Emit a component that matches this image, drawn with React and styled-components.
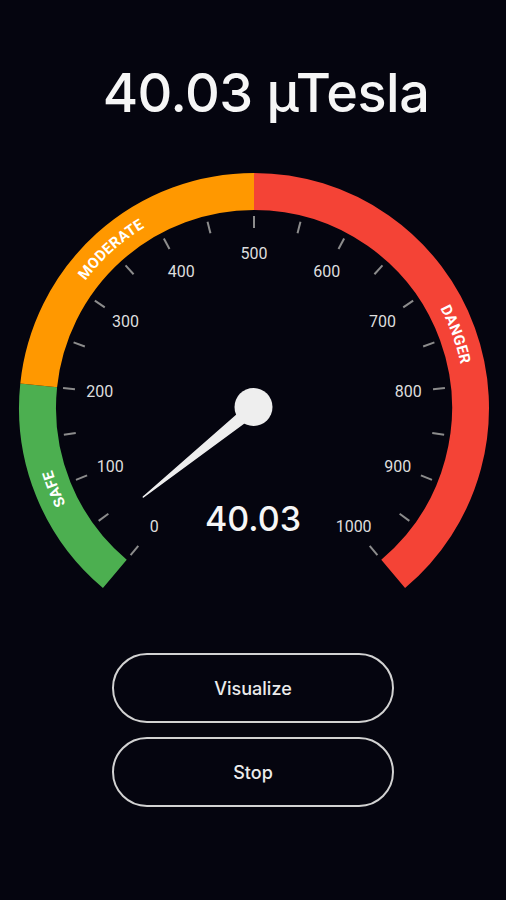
import styled, { createGlobalStyle } from "styled-components";

const GlobalStyle = createGlobalStyle`
  html, body {
    margin: 0;
    padding: 0;
    background: #05050f;
  }
`;

const CX = 254;
const CY = 248;
const R_BAND = 216.5;
const BAND_W = 37;

const angleOf = (v) => ((230 - v * 0.28) * Math.PI) / 180;

const pt = (v, r) => {
  const a = angleOf(v);
  return [CX + r * Math.cos(a), CY - r * Math.sin(a)];
};

const arcPath = (v1, v2, r) => {
  const [x1, y1] = pt(v1, r);
  const [x2, y2] = pt(v2, r);
  const large = (v2 - v1) * 0.28 > 180 ? 1 : 0;
  return `M ${x1} ${y1} A ${r} ${r} 0 ${large} 1 ${x2} ${y2}`;
};

const zones = [
  { id: "safe", from: 0, to: 200, color: "#4caf50", label: "SAFE" },
  { id: "moderate", from: 200, to: 500, color: "#ff9800", label: "MODERATE" },
  { id: "danger", from: 500, to: 1000, color: "#f44336", label: "DANGER" },
];

const value = 40.03;

const Page = styled.div`
  min-height: 900px;
  background: #05050f;
  display: flex;
  flex-direction: column;
  align-items: center;
  font-family: Inter, "Noto Sans", sans-serif;
  color: #f4f4f4;
`;

const Title = styled.h1`
  margin: 61px 0 35px;
  padding-left: 26px;
  font-size: 54px;
  line-height: 64px;
  font-weight: 500;
  letter-spacing: -0.5px;
  color: #f6f6f6;
`;

const GaugeSvg = styled.svg`
  display: block;
  width: 506px;
  height: 440px;
  flex-shrink: 0;
`;

const Buttons = styled.div`
  margin-top: 53px;
  display: flex;
  flex-direction: column;
  gap: 14px;
`;

const PillButton = styled.button`
  width: 282px;
  height: 70px;
  border-radius: 35px;
  border: 2px solid #d2d2d2;
  background: transparent;
  color: #ececec;
  font-family: Inter, "Noto Sans", sans-serif;
  font-size: 18px;
  font-weight: 500;
  cursor: pointer;
`;

const Gauge = () => {
  const ticks = [];
  for (let v = 0; v <= 1000; v += 50) ticks.push(v);
  const labels = [];
  for (let v = 0; v <= 1000; v += 100) labels.push(v);

  const na = angleOf(value);
  const tip = [CX + 142 * Math.cos(na), CY - 142 * Math.sin(na)];
  const px = Math.sin(na) * 6;
  const py = Math.cos(na) * 6;
  const needle = `${CX + px},${CY + py} ${tip[0]},${tip[1]} ${CX - px},${CY - py}`;

  return (
    <GaugeSvg viewBox="0 0 506 440">
      <defs>
        {zones.map((z) => (
          <path key={z.id} id={`txt-${z.id}`} d={arcPath(z.from, z.to, R_BAND - 5.3)} />
        ))}
      </defs>
      {zones.map((z) => (
        <path
          key={z.id}
          d={arcPath(z.from, z.to, R_BAND)}
          stroke={z.color}
          strokeWidth={BAND_W}
          fill="none"
        />
      ))}
      {zones.map((z) => (
        <text
          key={z.id}
          fill="#ffffff"
          fontFamily="Roboto, sans-serif"
          fontWeight="700"
          fontSize="15"
          letterSpacing="0.3"
        >
          <textPath href={`#txt-${z.id}`} startOffset="50%" textAnchor="middle">
            {z.label}
          </textPath>
        </text>
      ))}
      {ticks.map((v) => {
        const [x1, y1] = pt(v, 180);
        const [x2, y2] = pt(v, 192);
        return (
          <line key={v} x1={x1} y1={y1} x2={x2} y2={y2} stroke="#8c8c8c" strokeWidth="2" />
        );
      })}
      {labels.map((v) => {
        const [x, y] = pt(v, 155);
        return (
          <text
            key={v}
            x={x}
            y={y}
            fill="#dedede"
            fontFamily="Roboto, sans-serif"
            fontSize="16"
            textAnchor="middle"
            dominantBaseline="central"
          >
            {v}
          </text>
        );
      })}
      <polygon points={needle} fill="#eeeeee" strokeLinejoin="round" stroke="#eeeeee" strokeWidth="1.5" />
      <circle cx={CX - 0.5} cy={CY - 1} r="19" fill="#eeeeee" />
      <text
        x={253}
        y={371}
        fill="#f6f6f6"
        fontFamily="Inter, sans-serif"
        fontWeight="500"
        fontSize="34"
        textAnchor="middle"
      >
        {value.toFixed(2)}
      </text>
    </GaugeSvg>
  );
};

const App = () => {
  return (
    <Page>
      <GlobalStyle />
      <Title>{value.toFixed(2)} µTesla</Title>
      <Gauge />
      <Buttons>
        <PillButton>Visualize</PillButton>
        <PillButton>Stop</PillButton>
      </Buttons>
    </Page>
  );
};

export default App;
